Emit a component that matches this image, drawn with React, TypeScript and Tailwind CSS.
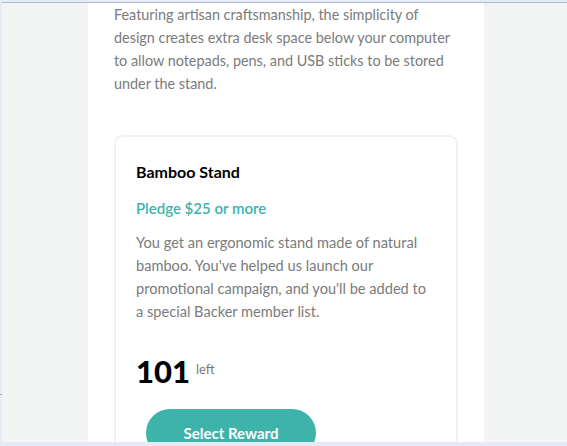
import React from "react";

export default function App() {
  return (
    <div
      className="relative w-[567px] h-[446px] overflow-hidden bg-[#e3ecf4]"
      style={{ fontFamily: "Lato, 'Liberation Sans', sans-serif" }}
    >
      <div className="absolute left-0 top-[394px] w-[2px] h-[1px] bg-[#9aa7b5]" />
      <div className="ml-[2px] mt-[2px] h-[440px] flex flex-col overflow-hidden">
        <div className="h-[1px] bg-[#aebbcc] shrink-0" />
        <div className="flex-1 bg-[#f3f4f4] overflow-hidden">
          <div className="ml-[86px] w-[396px] h-full bg-white px-[26px]">
            <p className="text-[14.4px] leading-[23px] text-[#7b7b7b] whitespace-nowrap">
              Featuring artisan craftsmanship, the simplicity of
              <br />
              design creates extra desk space below your computer
              <br />
              to allow notepads, pens, and USB sticks to be stored
              <br />
              under the stand.
            </p>
            <div className="mt-[40px] border-2 border-[#f2f2f2] rounded-lg px-[20px] pt-[24px] pb-6">
              <h3 className="text-[16px] leading-[22px] font-bold text-black">Bamboo Stand</h3>
              <p className="mt-[14px] text-[15px] leading-[22px] font-semibold text-[#3cb3ab]">
                Pledge $25 or more
              </p>
              <p className="mt-[12px] text-[14.6px] leading-[23px] text-[#7b7b7b] whitespace-nowrap">
                You get an ergonomic stand made of natural
                <br />
                bamboo. You've helped us launch our
                <br />
                promotional campaign, and you'll be added to
                <br />
                a special Backer member list.
              </p>
              <div className="mt-[28px] flex items-start gap-[6px]">
                <span className="text-[31px] leading-[40px] font-black text-black">101</span>
                <span className="mt-[10px] text-[13px] leading-[16px] text-[#7b7b7b]">left</span>
              </div>
              <button className="mt-[18px] ml-[10px] w-[170px] h-[48px] rounded-full bg-[#3db3aa] text-white text-[15px] font-bold">
                Select Reward
              </button>
            </div>
          </div>
        </div>
      </div>
    </div>
  );
}
